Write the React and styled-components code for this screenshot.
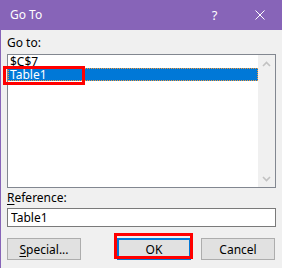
import React from "react";
import styled, { createGlobalStyle } from "styled-components";

const GlobalStyle = createGlobalStyle`
  html, body {
    margin: 0;
    padding: 0;
    background: #f0f0f0;
  }
  * {
    box-sizing: border-box;
  }
`;

const Window = styled.div`
  width: 282px;
  height: 268px;
  display: flex;
  flex-direction: column;
  font-family: "Noto Sans", "Open Sans", sans-serif;
  font-size: 12px;
  color: #000;
  overflow: hidden;
`;

const TitleBar = styled.div`
  height: 30px;
  flex-shrink: 0;
  display: flex;
  align-items: center;
  background: #8764b8;
  color: #fff;
`;

const Title = styled.div`
  flex: 1;
  padding-left: 10px;
  line-height: 16px;
`;

const TitleButton = styled.div`
  width: 45px;
  height: 30px;
  display: flex;
  align-items: center;
  justify-content: center;
  font-size: 13px;
`;

const Body = styled.div`
  flex: 1;
  display: flex;
  flex-direction: column;
  padding: 5px 6px 0 6px;
  border-left: 1px solid #8764b8;
  background: #f0f0f0;
`;

const Label = styled.div`
  line-height: 16px;
  margin-top: ${(p) => p.$top || 0}px;
  margin-bottom: ${(p) => p.$bottom || 0}px;
`;

const Key = styled.span`
  text-decoration: underline;
  text-underline-offset: 2px;
`;

const ListBox = styled.div`
  height: 134px;
  display: flex;
  border: 1px solid #828790;
  background: #fff;
`;

const Items = styled.div`
  flex: 1;
  display: flex;
  flex-direction: column;
`;

const Item = styled.div`
  position: relative;
  height: 13px;
  line-height: 13px;
  padding-left: 2px;
  white-space: nowrap;
  color: ${(p) => (p.$selected ? "#fff" : "#000")};
  background: ${(p) => (p.$selected ? "#0078d7" : "transparent")};
  outline: ${(p) => (p.$selected ? "1px dotted #f39a3b" : "none")};
  outline-offset: -1px;
`;

const ScrollBar = styled.div`
  width: 17px;
  display: flex;
  flex-direction: column;
  justify-content: space-between;
  background: #f0f0f0;
`;

const ScrollArrow = styled.div`
  height: 17px;
  display: flex;
  align-items: center;
  justify-content: center;
`;

const TextField = styled.input`
  height: 19px;
  margin-top: 2px;
  padding: 0 3px;
  border: 1px solid #7a7a7a;
  background: #fff;
  font-family: inherit;
  font-size: 12px;
  color: #000;
  outline: none;
`;

const ButtonRow = styled.div`
  display: flex;
  align-items: center;
  margin-top: 11px;
  padding-right: 1px;
`;

const Spacer = styled.div`
  flex: 1;
`;

const Marked = styled.div`
  position: relative;
  display: flex;
  margin-right: ${(p) => p.$gap || 0}px;
`;

const Button = styled.button`
  width: 74px;
  height: 22px;
  padding: 0;
  border: 1px solid ${(p) => (p.$default ? "#0078d7" : "#adadad")};
  box-shadow: ${(p) => (p.$default ? "inset 0 0 0 1px #0078d7" : "none")};
  background: #e1e1e1;
  font-family: inherit;
  font-size: 12px;
  color: #000;
`;

const Highlight = styled.div`
  position: absolute;
  left: ${(p) => p.$x}px;
  top: ${(p) => p.$y}px;
  width: ${(p) => p.$w}px;
  height: ${(p) => p.$h}px;
  border: 3px solid #ff0000;
  pointer-events: none;
`;

const Chevron = ({ up }) => (
  <svg width="9" height="6" viewBox="0 0 9 6">
    <polyline
      points={up ? "1,5 4.5,1.5 8,5" : "1,1 4.5,4.5 8,1"}
      fill="none"
      stroke="#c2c2c2"
      strokeWidth="1.6"
    />
  </svg>
);

const CloseIcon = () => (
  <svg width="10" height="10" viewBox="0 0 10 10">
    <path d="M0.5 0.5 L9.5 9.5 M9.5 0.5 L0.5 9.5" stroke="#fff" strokeWidth="1" />
  </svg>
);

export default function App() {
  return (
    <>
      <GlobalStyle />
      <Window>
        <TitleBar>
          <Title>Go To</Title>
          <TitleButton>?</TitleButton>
          <TitleButton>
            <CloseIcon />
          </TitleButton>
        </TitleBar>
        <Body>
          <Label $bottom={3}>Go to:</Label>
          <ListBox>
            <Items>
              <Item>$C$7</Item>
              <Item $selected>
                Table1
                <Highlight $x={-5} $y={-2} $w={82} $h={19} />
              </Item>
            </Items>
            <ScrollBar>
              <ScrollArrow>
                <Chevron up />
              </ScrollArrow>
              <ScrollArrow>
                <Chevron />
              </ScrollArrow>
            </ScrollBar>
          </ListBox>
          <Label $top={2}>
            <Key>R</Key>eference:
          </Label>
          <TextField defaultValue="Table1" />
          <ButtonRow>
            <Button>
              <Key>S</Key>pecial...
            </Button>
            <Spacer />
            <Marked $gap={10}>
              <Button $default>OK</Button>
              <Highlight $x={-3} $y={-5} $w={79} $h={26} />
            </Marked>
            <Button>Cancel</Button>
          </ButtonRow>
        </Body>
      </Window>
    </>
  );
}
